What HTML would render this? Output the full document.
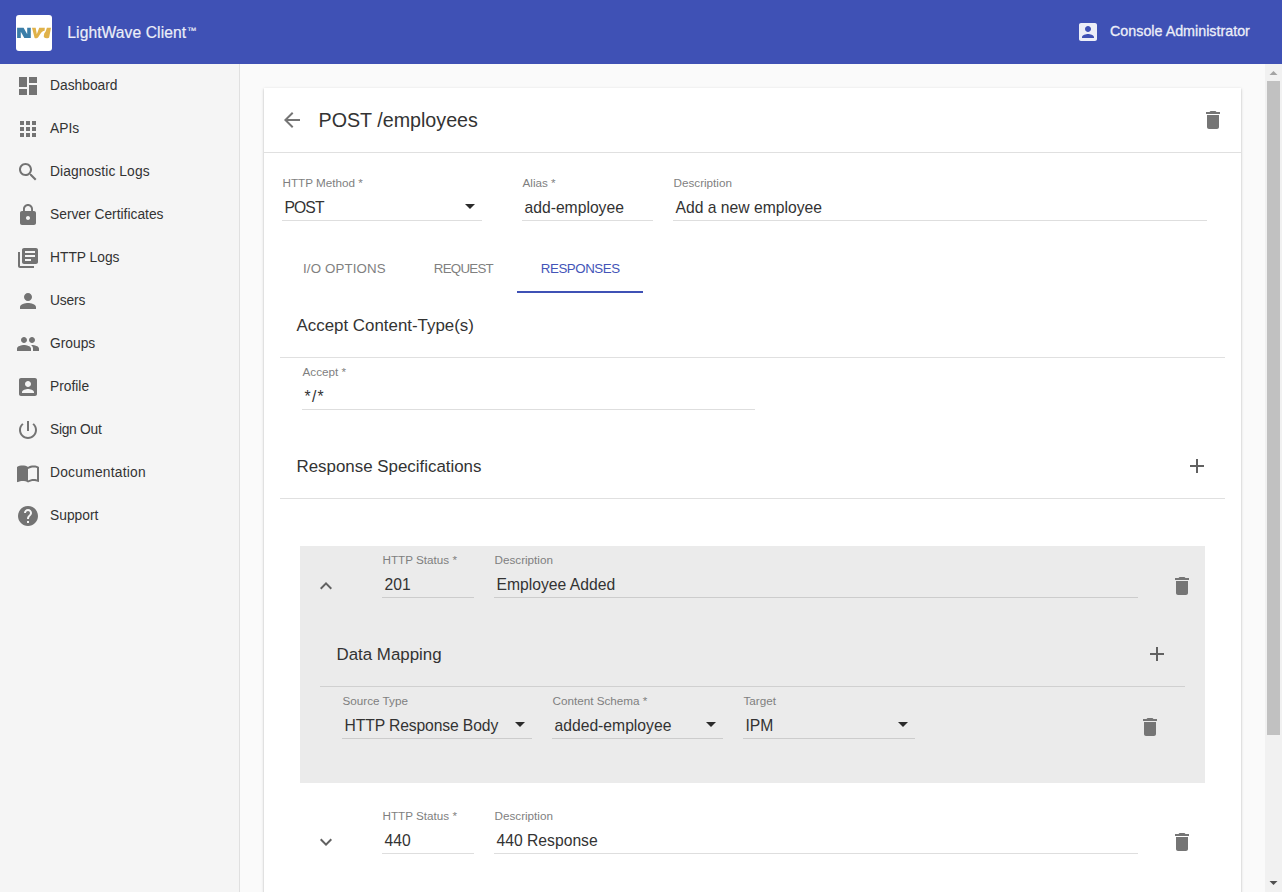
<!DOCTYPE html>
<html><head><meta charset="utf-8"><title>LightWave Client</title>
<style>
html,body{margin:0;padding:0;width:1282px;height:892px;overflow:hidden;background:#fafafa;}
body{position:relative;font-family:"Liberation Sans",sans-serif;}
.t{position:absolute;white-space:nowrap;}
.r{position:absolute;}
.i{position:absolute;display:block;}
</style></head><body>
<div class="r" style="left:0px;top:0px;width:1282px;height:64px;background:#3f51b5;"></div>
<div class="r" style="left:16px;top:15px;width:36px;height:36px;background:#fff;border-radius:3px;"></div>
<svg class="i" style="left:16px;top:15px;width:36px;height:36px" viewBox="0 0 36 36"><path fill="#3b7ea8" d="M1.1 12.8H7.6L11.2 19.3V12.8H14.8V23H8.3L4.8 16.7V23H1.1Z"/><path fill="#e0b24a" d="M16 12.8H19.7L20.8 19.3L23.2 12.8H28.8L28.6 15.8C27.2 16.1 25.8 16.6 24.8 18.2L22.2 22.2C21.4 23.3 19.6 23.4 18.6 23Z"/><path fill="#e0b24a" d="M30.9 12.8H35L33.2 22.2C33 23 32 23.2 30.6 23.2C28.6 23.2 27.6 22.4 27.8 21L28.3 18.2L29.6 16.4Z"/></svg>
<div class="t " style="left:67.3px;top:24.99px;font-size:15.6px;line-height:15.6px;color:#eceef8;letter-spacing:0.1px;-webkit-text-stroke:0.2px #eceef8;">LightWave Client</div>
<div class="t " style="left:187px;top:25.66px;font-size:9.5px;line-height:9.5px;color:#eceef8;-webkit-text-stroke:0.15px #eceef8;">™</div>
<svg class="i" style="left:1076px;top:20px;width:24px;height:24px" viewBox="0 0 24 24"><path fill="#eceef8" d="M3 5v14c0 1.1.89 2 2 2h14c1.1 0 2-.9 2-2V5c0-1.1-.9-2-2-2H5c-1.11 0-2 .9-2 2zm12 4c0 1.66-1.34 3-3 3s-3-1.34-3-3 1.34-3 3-3 3 1.34 3 3zm-9 8c0-2 4-3.1 6-3.1s6 1.1 6 3.1v1H6v-1z"/></svg>
<div class="t " style="left:1110px;top:23.89px;font-size:14.3px;line-height:14.3px;color:#eceef8;-webkit-text-stroke:0.3px #eceef8;">Console Administrator</div>
<div class="r" style="left:0px;top:64px;width:239px;height:828px;background:#f5f5f5;"></div>
<div class="r" style="left:239px;top:64px;width:1px;height:828px;background:#e0e0e0;"></div>
<svg class="i" style="left:16px;top:74px;width:24px;height:24px" viewBox="0 0 24 24"><path fill="#737373" d="M3 13h8V3H3v10zm0 8h8v-6H3v6zm10 0h8V11h-8v10zm0-18v6h8V3h-8z"/></svg>
<div class="t " style="left:50px;top:79.32px;font-size:13.8px;line-height:13.8px;color:#333333;letter-spacing:0px;">Dashboard</div>
<svg class="i" style="left:16px;top:117px;width:24px;height:24px" viewBox="0 0 24 24"><path fill="#737373" d="M4 8h4V4H4v4zm6 12h4v-4h-4v4zm-6 0h4v-4H4v4zm0-6h4v-4H4v4zm6 0h4v-4h-4v4zm6-10v4h4V4h-4zm-6 4h4V4h-4v4zm6 6h4v-4h-4v4zm0 6h4v-4h-4v4z"/></svg>
<div class="t " style="left:50px;top:122.32px;font-size:13.8px;line-height:13.8px;color:#333333;letter-spacing:0px;">APIs</div>
<svg class="i" style="left:16px;top:160px;width:24px;height:24px" viewBox="0 0 24 24"><path fill="#737373" d="M15.5 14h-.79l-.28-.27C15.41 12.59 16 11.11 16 9.5 16 5.91 13.09 3 9.5 3S3 5.91 3 9.5 5.91 16 9.5 16c1.610 0 3.09-.59 4.23-1.57l.27.28v.79l5 4.99L20.49 19l-4.99-5zm-6 0C7.01 14 5 11.99 5 9.5S7.01 5 9.5 5 14 7.01 14 9.5 11.99 14 9.5 14z"/></svg>
<div class="t " style="left:50px;top:165.32px;font-size:13.8px;line-height:13.8px;color:#333333;letter-spacing:0.1px;">Diagnostic Logs</div>
<svg class="i" style="left:16px;top:203px;width:24px;height:24px" viewBox="0 0 24 24"><path fill="#737373" d="M18 8h-1V6c0-2.76-2.24-5-5-5S7 3.24 7 6v2H6c-1.1 0-2 .9-2 2v10c0 1.1.9 2 2 2h12c1.1 0 2-.9 2-2V10c0-1.1-.9-2-2-2zm-6 9c-1.1 0-2-.9-2-2s.9-2 2-2 2 .9 2 2-.9 2-2 2zm3.1-9H8.9V6c0-1.71 1.39-3.1 3.1-3.1 1.71 0 3.1 1.39 3.1 3.1v2z"/></svg>
<div class="t " style="left:50px;top:208.32px;font-size:13.8px;line-height:13.8px;color:#333333;letter-spacing:0px;">Server Certificates</div>
<svg class="i" style="left:16px;top:246px;width:24px;height:24px" viewBox="0 0 24 24"><path fill="#737373" d="M4 6H2v14c0 1.1.9 2 2 2h14v-2H4V6zm16-4H8c-1.1 0-2 .9-2 2v12c0 1.1.9 2 2 2h12c1.1 0 2-.9 2-2V4c0-1.1-.9-2-2-2zm-1 9H9V9h10v2zm-4 4H9v-2h6v2zm4-8H9V5h10v2z"/></svg>
<div class="t " style="left:50px;top:251.32px;font-size:13.8px;line-height:13.8px;color:#333333;letter-spacing:0px;">HTTP Logs</div>
<svg class="i" style="left:16px;top:289px;width:24px;height:24px" viewBox="0 0 24 24"><path fill="#737373" d="M12 12c2.21 0 4-1.79 4-4s-1.79-4-4-4-4 1.79-4 4 1.79 4 4 4zm0 2c-2.67 0-8 1.34-8 4v2h16v-2c0-2.66-5.33-4-8-4z"/></svg>
<div class="t " style="left:50px;top:294.32px;font-size:13.8px;line-height:13.8px;color:#333333;letter-spacing:-0.15px;">Users</div>
<svg class="i" style="left:16px;top:332px;width:24px;height:24px" viewBox="0 0 24 24"><path fill="#737373" d="M16 11c1.66 0 2.99-1.34 2.99-3S17.66 5 16 5c-1.66 0-3 1.34-3 3s1.34 3 3 3zm-8 0c1.66 0 2.99-1.34 2.99-3S9.66 5 8 5C6.34 5 5 6.34 5 8s1.34 3 3 3zm0 2c-2.33 0-7 1.17-7 3.5V19h14v-2.5c0-2.33-4.67-3.5-7-3.5zm8 0c-.29 0-.62.02-.97.05 1.16.84 1.97 1.97 1.97 3.45V19h6v-2.5c0-2.33-4.670-3.5-7-3.5z"/></svg>
<div class="t " style="left:50px;top:337.32px;font-size:13.8px;line-height:13.8px;color:#333333;letter-spacing:0px;">Groups</div>
<svg class="i" style="left:16px;top:375px;width:24px;height:24px" viewBox="0 0 24 24"><path fill="#737373" d="M3 5v14c0 1.1.89 2 2 2h14c1.1 0 2-.9 2-2V5c0-1.1-.9-2-2-2H5c-1.11 0-2 .9-2 2zm12 4c0 1.66-1.34 3-3 3s-3-1.34-3-3 1.34-3 3-3 3 1.34 3 3zm-9 8c0-2 4-3.1 6-3.1s6 1.1 6 3.1v1H6v-1z"/></svg>
<div class="t " style="left:50px;top:380.32px;font-size:13.8px;line-height:13.8px;color:#333333;letter-spacing:0px;">Profile</div>
<svg class="i" style="left:16px;top:418px;width:24px;height:24px" viewBox="0 0 24 24"><path fill="#737373" d="M13 3h-2v10h2V3zm4.83 2.17l-1.42 1.42C17.99 7.86 19 9.81 19 12c0 3.87-3.13 7-7 7s-7-3.13-7-7c0-2.19 1.01-4.14 2.58-5.42L6.17 5.17C4.23 6.82 3 9.26 3 12c0 4.97 4.03 9 9 9s9-4.03 9-9c0-2.74-1.23-5.18-3.170-6.83z"/></svg>
<div class="t " style="left:50px;top:423.32px;font-size:13.8px;line-height:13.8px;color:#333333;letter-spacing:-0.28px;">Sign Out</div>
<svg class="i" style="left:16px;top:461px;width:24px;height:24px" viewBox="0 0 24 24"><path fill="#737373" d="M21 5c-1.11-.35-2.33-.5-3.5-.5-1.95 0-4.05.4-5.5 1.5-1.45-1.1-3.55-1.5-5.5-1.5S2.45 4.9 1 6v14.65c0 .25.25.5.5.5.1 0 .15-.05.25-.05C3.1 20.45 5.05 20 6.5 20c1.95 0 4.05.4 5.5 1.5 1.35-.85 3.8-1.5 5.5-1.5 1.65 0 3.35.3 4.75 1.05.1.05.15.05.25.05.25 0 .5-.25.5-.5V6c-.6-.45-1.25-.75-2-1zm0 13.5c-1.1-.35-2.3-.5-3.5-.5-1.7 0-4.15.65-5.5 1.5V8c1.35-.85 3.8-1.5 5.5-1.5 1.2 0 2.4.15 3.5.5v11.5z"/></svg>
<div class="t " style="left:50px;top:466.32px;font-size:13.8px;line-height:13.8px;color:#333333;letter-spacing:0.24px;">Documentation</div>
<svg class="i" style="left:16px;top:504px;width:24px;height:24px" viewBox="0 0 24 24"><path fill="#737373" d="M12 2C6.48 2 2 6.48 2 12s4.48 10 10 10 10-4.48 10-10S17.52 2 12 2zm1 17h-2v-2h2v2zm2.07-7.75l-.9.92C13.45 12.9 13 13.5 13 15h-2v-.5c0-1.1.45-2.1 1.17-2.83l1.24-1.26c.37-.36.59-.86.59-1.41 0-1.1-.9-2-2-2s-2 .9-2 2H8c0-2.21 1.79-4 4-4s4 1.79 4 4c0 .88-.36 1.68-.93 2.25z"/></svg>
<div class="t " style="left:50px;top:509.32px;font-size:13.8px;line-height:13.8px;color:#333333;letter-spacing:0px;">Support</div>
<div class="r" style="left:240px;top:64px;width:1025px;height:828px;background:#fafafa;"></div>
<div class="r" style="left:264px;top:88px;width:977px;height:820px;background:#fff;box-shadow:0 1px 3px rgba(0,0,0,.2),0 1px 1px rgba(0,0,0,.14),0 2px 1px -1px rgba(0,0,0,.12);"></div>
<svg class="i" style="left:280px;top:108px;width:24px;height:24px" viewBox="0 0 24 24"><path fill="#757575" d="M20 11H7.83l5.59-5.59L12 4l-8 8 8 8 1.41-1.41L7.83 13H20v-2z"/></svg>
<div class="t " style="left:318.5px;top:111.07px;font-size:19.7px;line-height:19.7px;color:#333333;">POST /employees</div>
<svg class="i" style="left:1201px;top:108px;width:24px;height:24px" viewBox="0 0 24 24"><path fill="#757575" d="M6 19c0 1.1.9 2 2 2h8c1.1 0 2-.9 2-2V7H6v12zM19 4h-3.5l-1-1h-5l-1 1H5v2h14V4z"/></svg>
<div class="r" style="left:264px;top:152px;width:977px;height:1px;background:#e0e0e0;"></div>
<div class="t " style="left:282.5px;top:177.09px;font-size:11.7px;line-height:11.7px;color:#7f7f7f;">HTTP Method *</div><div class="t " style="left:284.5px;top:199.71px;font-size:15.7px;line-height:15.7px;color:#333333;letter-spacing:-0.9px;">POST</div><div class="r" style="left:282px;top:220px;width:200px;height:1px;background:rgba(0,0,0,0.13);"></div><svg class="i" style="left:458px;top:194px;width:24px;height:24px" viewBox="0 0 24 24"><path fill="#2b2b2b" d="M7 10l5 5 5-5z"/></svg>
<div class="t " style="left:522.5px;top:177.09px;font-size:11.7px;line-height:11.7px;color:#7f7f7f;">Alias *</div><div class="t " style="left:524.5px;top:199.71px;font-size:15.7px;line-height:15.7px;color:#333333;letter-spacing:0px;">add-employee</div><div class="r" style="left:522px;top:220px;width:131px;height:1px;background:rgba(0,0,0,0.13);"></div>
<div class="t " style="left:673.5px;top:177.09px;font-size:11.7px;line-height:11.7px;color:#7f7f7f;">Description</div><div class="t " style="left:675.5px;top:199.71px;font-size:15.7px;line-height:15.7px;color:#333333;letter-spacing:0px;">Add a new employee</div><div class="r" style="left:673px;top:220px;width:534px;height:1px;background:rgba(0,0,0,0.13);"></div>
<div class="t" style="left:280px;width:129px;text-align:center;text-indent:-0.15px;letter-spacing:0.15px;top:261.74px;font-size:13.3px;line-height:13.3px;color:#808080">I/O OPTIONS</div>
<div class="t" style="left:409px;width:108px;text-align:center;text-indent:0.75px;letter-spacing:-0.75px;top:261.74px;font-size:13.3px;line-height:13.3px;color:#808080">REQUEST</div>
<div class="t" style="left:517px;width:126px;text-align:center;text-indent:0.45px;letter-spacing:-0.45px;top:261.74px;font-size:13.3px;line-height:13.3px;color:#4354b8">RESPONSES</div>
<div class="r" style="left:517px;top:291px;width:126px;height:2px;background:#3f51b5;"></div>
<div class="t " style="left:296.5px;top:317.69px;font-size:16.9px;line-height:16.9px;color:#333333;">Accept Content-Type(s)</div>
<div class="r" style="left:280px;top:357px;width:945px;height:1px;background:#e0e0e0;"></div>
<div class="t " style="left:302.5px;top:366.09px;font-size:11.7px;line-height:11.7px;color:#7f7f7f;">Accept *</div><div class="t " style="left:304.5px;top:388.71px;font-size:15.7px;line-height:15.7px;color:#333333;letter-spacing:1.3px;">*/*</div><div class="r" style="left:302px;top:409px;width:453px;height:1px;background:rgba(0,0,0,0.13);"></div>
<div class="t " style="left:296.5px;top:458.69px;font-size:16.9px;line-height:16.9px;color:#333333;">Response Specifications</div>
<svg class="i" style="left:1185px;top:454px;width:24px;height:24px" viewBox="0 0 24 24"><path fill="#616161" d="M19 13h-6v6h-2v-6H5v-2h6V5h2v6h6v2z"/></svg>
<div class="r" style="left:280px;top:498px;width:945px;height:1px;background:#e0e0e0;"></div>
<div class="r" style="left:300px;top:546px;width:905px;height:237px;background:#ebebeb;"></div>
<svg class="i" style="left:314px;top:574px;width:24px;height:24px" viewBox="0 0 24 24"><path fill="#616161" d="M12 8l-6 6 1.41 1.41L12 10.83l4.59 4.58L18 14z"/></svg>
<div class="t " style="left:382.5px;top:554.09px;font-size:11.7px;line-height:11.7px;color:#7f7f7f;">HTTP Status *</div><div class="t " style="left:384.5px;top:576.71px;font-size:15.7px;line-height:15.7px;color:#333333;letter-spacing:0px;">201</div><div class="r" style="left:382px;top:597px;width:92px;height:1px;background:rgba(0,0,0,0.13);"></div>
<div class="t " style="left:494.5px;top:554.09px;font-size:11.7px;line-height:11.7px;color:#7f7f7f;">Description</div><div class="t " style="left:496.5px;top:576.71px;font-size:15.7px;line-height:15.7px;color:#333333;letter-spacing:0px;">Employee Added</div><div class="r" style="left:494px;top:597px;width:644px;height:1px;background:rgba(0,0,0,0.13);"></div>
<svg class="i" style="left:1170px;top:574px;width:24px;height:24px" viewBox="0 0 24 24"><path fill="#757575" d="M6 19c0 1.1.9 2 2 2h8c1.1 0 2-.9 2-2V7H6v12zM19 4h-3.5l-1-1h-5l-1 1H5v2h14V4z"/></svg>
<div class="t " style="left:336.5px;top:647.19px;font-size:16.9px;line-height:16.9px;color:#333333;">Data Mapping</div>
<svg class="i" style="left:1145px;top:642px;width:24px;height:24px" viewBox="0 0 24 24"><path fill="#616161" d="M19 13h-6v6h-2v-6H5v-2h6V5h2v6h6v2z"/></svg>
<div class="r" style="left:320px;top:686px;width:865px;height:1px;background:#d0d0d0;"></div>
<div class="t " style="left:342.5px;top:695.09px;font-size:11.7px;line-height:11.7px;color:#7f7f7f;">Source Type</div><div class="t " style="left:344.5px;top:717.71px;font-size:15.7px;line-height:15.7px;color:#333333;letter-spacing:-0.12px;">HTTP Response Body</div><div class="r" style="left:342px;top:738px;width:190px;height:1px;background:rgba(0,0,0,0.13);"></div><svg class="i" style="left:508px;top:712px;width:24px;height:24px" viewBox="0 0 24 24"><path fill="#2b2b2b" d="M7 10l5 5 5-5z"/></svg>
<div class="t " style="left:552.5px;top:695.09px;font-size:11.7px;line-height:11.7px;color:#7f7f7f;">Content Schema *</div><div class="t " style="left:554.5px;top:717.71px;font-size:15.7px;line-height:15.7px;color:#333333;letter-spacing:0px;">added-employee</div><div class="r" style="left:552px;top:738px;width:171px;height:1px;background:rgba(0,0,0,0.13);"></div><svg class="i" style="left:699px;top:712px;width:24px;height:24px" viewBox="0 0 24 24"><path fill="#2b2b2b" d="M7 10l5 5 5-5z"/></svg>
<div class="t " style="left:743.5px;top:695.09px;font-size:11.7px;line-height:11.7px;color:#7f7f7f;">Target</div><div class="t " style="left:745.5px;top:717.71px;font-size:15.7px;line-height:15.7px;color:#333333;letter-spacing:0px;">IPM</div><div class="r" style="left:743px;top:738px;width:172px;height:1px;background:rgba(0,0,0,0.13);"></div><svg class="i" style="left:891px;top:712px;width:24px;height:24px" viewBox="0 0 24 24"><path fill="#2b2b2b" d="M7 10l5 5 5-5z"/></svg>
<svg class="i" style="left:1138px;top:715px;width:24px;height:24px" viewBox="0 0 24 24"><path fill="#757575" d="M6 19c0 1.1.9 2 2 2h8c1.1 0 2-.9 2-2V7H6v12zM19 4h-3.5l-1-1h-5l-1 1H5v2h14V4z"/></svg>
<svg class="i" style="left:314px;top:830px;width:24px;height:24px" viewBox="0 0 24 24"><path fill="#616161" d="M16.59 8.59L12 13.17 7.41 8.59 6 10l6 6 6-6z"/></svg>
<div class="t " style="left:382.5px;top:810.09px;font-size:11.7px;line-height:11.7px;color:#7f7f7f;">HTTP Status *</div><div class="t " style="left:384.5px;top:832.71px;font-size:15.7px;line-height:15.7px;color:#333333;letter-spacing:0px;">440</div><div class="r" style="left:382px;top:853px;width:92px;height:1px;background:rgba(0,0,0,0.13);"></div>
<div class="t " style="left:494.5px;top:810.09px;font-size:11.7px;line-height:11.7px;color:#7f7f7f;">Description</div><div class="t " style="left:496.5px;top:832.71px;font-size:15.7px;line-height:15.7px;color:#333333;letter-spacing:0px;">440 Response</div><div class="r" style="left:494px;top:853px;width:644px;height:1px;background:rgba(0,0,0,0.13);"></div>
<svg class="i" style="left:1170px;top:830px;width:24px;height:24px" viewBox="0 0 24 24"><path fill="#757575" d="M6 19c0 1.1.9 2 2 2h8c1.1 0 2-.9 2-2V7H6v12zM19 4h-3.5l-1-1h-5l-1 1H5v2h14V4z"/></svg>
<div class="r" style="left:1265px;top:64px;width:17px;height:828px;background:#f1f1f1;"></div>
<div class="r" style="left:1267px;top:81px;width:13px;height:654px;background:#c1c1c1;"></div>
<svg class="i" style="left:1265px;top:64px;width:17px;height:17px" viewBox="0 0 17 17"><path fill="#a3a3a3" d="M4.5 11h8l-4-4z"/></svg>
<svg class="i" style="left:1265px;top:875px;width:17px;height:17px" viewBox="0 0 17 17"><path fill="#505050" d="M4.5 6h8l-4 4z"/></svg>
</body></html>
